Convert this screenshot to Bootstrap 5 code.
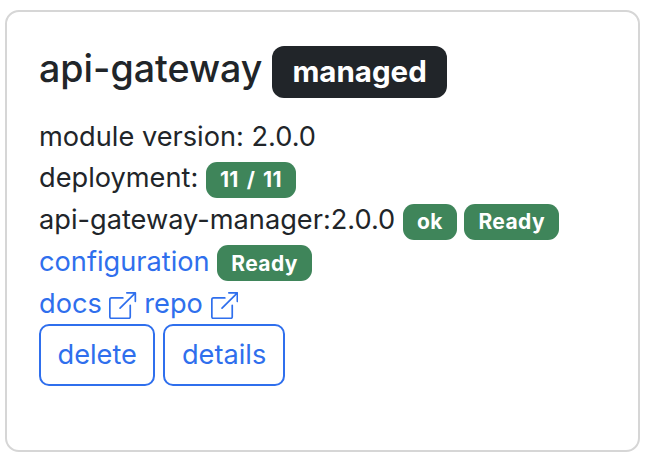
<!DOCTYPE html>
<html lang="en">
<head>
    <meta charset="utf-8">
    <title>api-gateway</title>
    <link href="https://cdn.jsdelivr.net/npm/bootstrap@5.3.3/dist/css/bootstrap.min.css" rel="stylesheet">
    <style>
        html {
            font-size: 27.2px;
        }
        body {
            font-family: Inter, "Liberation Sans", sans-serif;
            color: #212529;
            padding: 10px 8px 8px 5px;
        }
        .module-card {
            height: 442px;
            border: 2px solid #d6d6d6;
            border-radius: 14px;
        }
        .module-card .card-body {
            padding: 34px 32px 32px;
        }
        .module-title {
            font-size: 37.6px;
            font-weight: 500;
            margin-bottom: 19px;
        }
        .module-title .badge {
            font-size: 29.5px;
            padding: 11px 20px;
            border-radius: 12px;
        }
        .state-pill {
            font-size: 21px;
            letter-spacing: .4px;
            word-spacing: 2.5px;
            padding: 7.5px 14px;
            border-radius: 11px;
        }
        .status-row {
            margin-bottom: 1px;
        }
        a {
            color: #2f6fed;
            text-decoration: none;
        }
        .text-bg-success {
            background-color: #3f855a !important;
        }
        .btn-outline-primary {
            --bs-btn-color: #2f6fed;
            --bs-btn-border-color: #2f6fed;
            border-width: 2px;
            border-radius: 10px;
            padding: 8.5px 16.5px;
        }
        .module-actions {
            gap: 8px;
        }
        .ext-icon {
            width: 1em;
            height: 1em;
            fill: currentColor;
        }
    </style>
</head>
<body>
    <div class="card module-card">
        <div class="card-body">
            <h4 class="module-title">api-gateway <span class="badge text-bg-dark">managed</span></h4>
            <div class="status-row">module version: 2.0.0</div>
            <div class="status-row">deployment: <span class="badge state-pill text-bg-success">11 / 11</span></div>
            <div class="status-row">api-gateway-manager:2.0.0 <span class="badge state-pill text-bg-success">ok</span> <span class="badge state-pill text-bg-success">Ready</span></div>
            <div class="status-row"><a href="#">configuration</a> <span class="badge state-pill text-bg-success">Ready</span></div>
            <div>
                <a href="#">docs <svg class="ext-icon" viewBox="0 0 16 16"><path fill-rule="evenodd" d="M8.636 3.5a.5.5 0 0 0-.5-.5H1.5A1.5 1.5 0 0 0 0 4.5v10A1.5 1.5 0 0 0 1.5 16h10a1.5 1.5 0 0 0 1.5-1.5V7.864a.5.5 0 0 0-1 0V14.5a.5.5 0 0 1-.5.5h-10a.5.5 0 0 1-.5-.5v-10a.5.5 0 0 1 .5-.5h6.636a.5.5 0 0 0 .5-.5z"/><path fill-rule="evenodd" d="M16 .5a.5.5 0 0 0-.5-.5h-5a.5.5 0 0 0 0 1h3.793L6.146 9.146a.5.5 0 1 0 .708.708L15 1.707V5.5a.5.5 0 0 0 1 0v-5z"/></svg></a>
                <a href="#">repo <svg class="ext-icon" viewBox="0 0 16 16"><path fill-rule="evenodd" d="M8.636 3.5a.5.5 0 0 0-.5-.5H1.5A1.5 1.5 0 0 0 0 4.5v10A1.5 1.5 0 0 0 1.5 16h10a1.5 1.5 0 0 0 1.5-1.5V7.864a.5.5 0 0 0-1 0V14.5a.5.5 0 0 1-.5.5h-10a.5.5 0 0 1-.5-.5v-10a.5.5 0 0 1 .5-.5h6.636a.5.5 0 0 0 .5-.5z"/><path fill-rule="evenodd" d="M16 .5a.5.5 0 0 0-.5-.5h-5a.5.5 0 0 0 0 1h3.793L6.146 9.146a.5.5 0 1 0 .708.708L15 1.707V5.5a.5.5 0 0 0 1 0v-5z"/></svg></a>
            </div>
            <div class="d-flex module-actions">
                <button type="button" class="btn btn-outline-primary">delete</button>
                <button type="button" class="btn btn-outline-primary">details</button>
            </div>
        </div>
    </div>
    <script src="https://cdn.jsdelivr.net/npm/bootstrap@5.3.3/dist/js/bootstrap.bundle.min.js"></script>
</body>
</html>
